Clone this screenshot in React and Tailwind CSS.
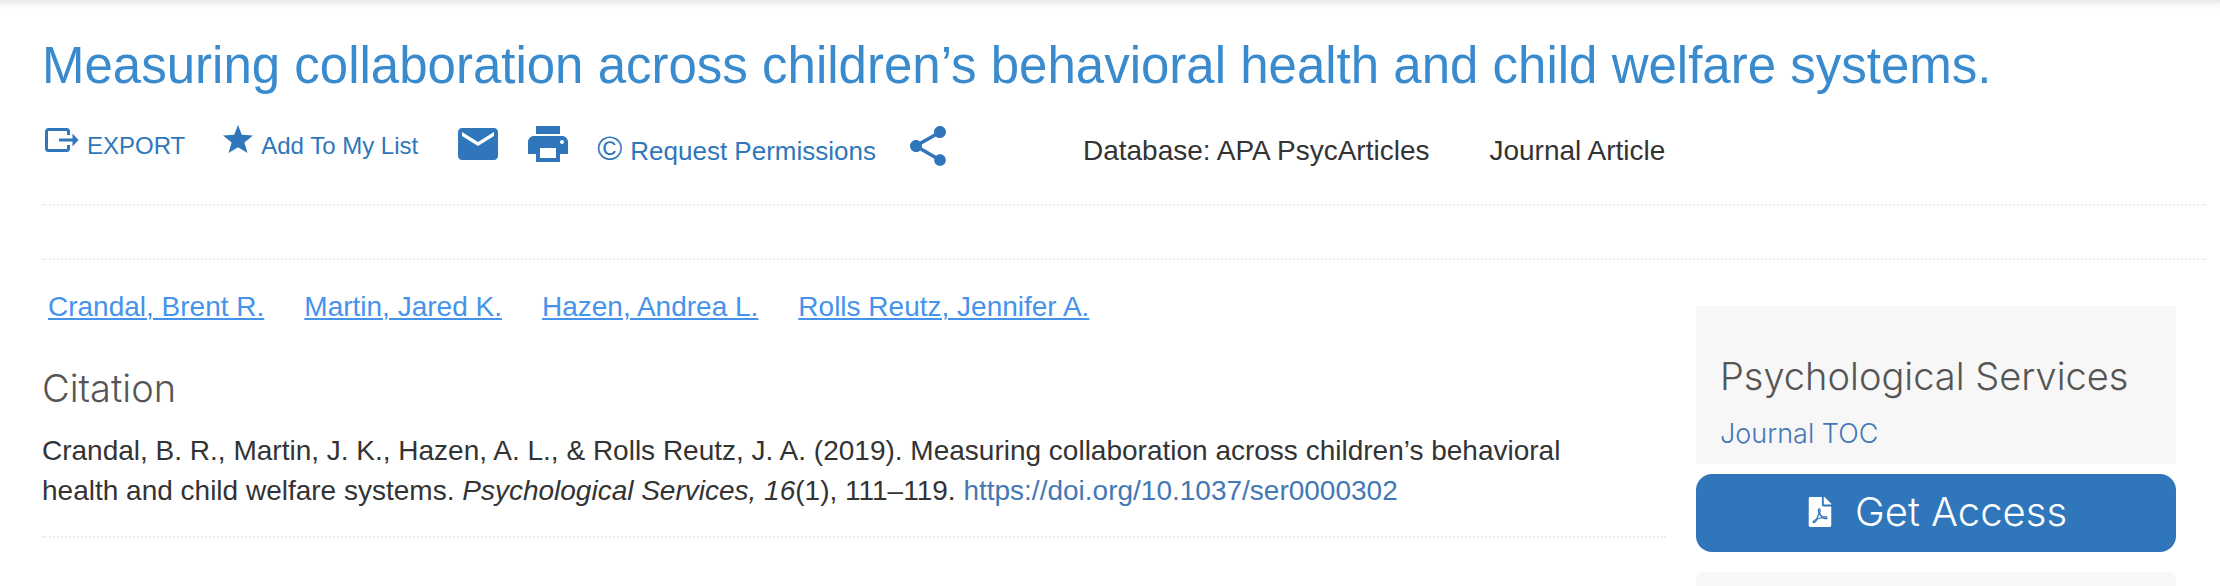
import React from 'react';
import { MdEmail, MdPrint, MdShare } from 'react-icons/md';
import { FaFilePdf } from 'react-icons/fa';

const authors = ['Crandal, Brent R.', 'Martin, Jared K.', 'Hazen, Andrea L.', 'Rolls Reutz, Jennifer A.'];

function ExportIcon() {
  return (
    <svg viewBox="0 0 34 24" className="w-[34px] h-6" fill="none" stroke="currentColor" strokeWidth="3">
      <path d="M23.500 7V3.500a2 2 0 0 0-2-2h-18a2 2 0 0 0-2 2v17a2 2 0 0 0 2 2h18a2 2 0 0 0 2-2V17" />
      <path d="M14 12h14" />
      <path d="M27.500 5.500l6 6.500-6 6.500z" fill="currentColor" stroke="none" />
    </svg>
  );
}

function StarIcon() {
  return (
    <svg viewBox="0 0 30 28" className="w-[30px] h-7" fill="currentColor">
      <path d="M15 0l3.800 9.800 11.200.8-8.600 7 3.100 10.400L15 22.200 5.500 28l3.100-10.400-8.600-7 11.200-.8z" />
    </svg>
  );
}

function Toolbar() {
  return (
    <div className="flex items-start h-[109px] pt-[25px] text-[#2f76bb]">
      <button type="button" className="flex items-start pt-2 ml-[3px] text-2xl">
        <ExportIcon />
        <span className="ml-2 mt-[2px]">EXPORT</span>
      </button>
      <button type="button" className="flex items-start pt-[5px] ml-[38px] text-2xl">
        <StarIcon />
        <span className="ml-2 mt-[5px]">Add To My List</span>
      </button>
      <button type="button" aria-label="Email" className="ml-9">
        <MdEmail size={48} />
      </button>
      <button type="button" aria-label="Print" className="ml-[22px]">
        <MdPrint size={48} />
      </button>
      <a href="#permissions" className="flex items-baseline ml-[25px] mt-2 text-[26px] leading-10">
        <span className="text-[34px] mr-2">©</span>
        Request Permissions
      </a>
      <button type="button" aria-label="Share" className="ml-[28px] mt-[2px]">
        <MdShare size={48} />
      </button>
      <p className="ml-[131px] mt-[11px] text-[28px] leading-10 text-[#333]">Database: APA PsycArticles</p>
      <p className="ml-[60px] mt-[11px] text-[28px] leading-10 text-[#333]">Journal Article</p>
    </div>
  );
}

function Sidebar() {
  return (
    <aside className="w-[480px] shrink-0 mt-[46px]">
      <div className="bg-[#f7f7f7] px-6 pt-11 pb-2">
        <h2 className="font-['Inter',sans-serif] font-light text-[38px] leading-[52px] text-[#555]">
          Psychological Services
        </h2>
        <a
          href="#toc"
          className="block pt-[10px] font-['Inter',sans-serif] font-light text-[27px] leading-[44px] text-[#4478b5]"
        >
          Journal TOC
        </a>
      </div>
      <button
        type="button"
        className="flex items-center justify-center w-full h-[78px] pb-[3px] mt-[10px] rounded-2xl bg-[#2f76bb] text-white font-['Inter',sans-serif] font-light text-[40px]"
      >
        <FaFilePdf size={30} className="mr-5" />
        Get Access
      </button>
      <div className="h-[14px] mt-5 rounded-t-lg bg-[#f7f7f7]" />
    </aside>
  );
}

function App() {
  return (
    <div className="overflow-hidden bg-white font-['Liberation_Sans',sans-serif] text-[#333]">
      <div className="h-[10px] bg-linear-to-b from-[#e8e8e8] via-[#f8f8f8] to-white" />
      <header className="pl-[42px] pr-[14px] pt-[26px]">
        <h1 className="text-[51px] leading-[59px] text-[#3a8bce]">
          Measuring collaboration across children’s behavioral health and child welfare systems.
        </h1>
        <Toolbar />
        <div className="h-14 border-y-2 border-dotted border-[#ececec]" />
      </header>
      <div className="flex pl-[42px] pr-[44px]">
        <main className="grow mr-[30px]">
          <div className="flex gap-10 pl-[6px] mt-[27px]">
            {authors.map((name) => (
              <a
                key={name}
                href="#author"
                className="text-[28px] leading-10 text-[#4693ec] underline decoration-2 underline-offset-2"
              >
                {name}
              </a>
            ))}
          </div>
          <h2 className="mt-[35px] font-['Inter',sans-serif] font-light text-[38px] leading-[52px] text-[#555]">
            Citation
          </h2>
          <p className="mt-[17px] max-w-[1560px] text-[28px] leading-10">
            Crandal, B. R., Martin, J. K., Hazen, A. L., &amp; Rolls Reutz, J. A. (2019). Measuring collaboration across
            children’s behavioral health and child welfare systems. <em>Psychological Services, 16</em>(1), 111–119.{' '}
            <a href="https://doi.org/10.1037/ser0000302" className="text-[#4478b5]">
              https://doi.org/10.1037/ser0000302
            </a>
          </p>
          <hr className="mt-[25px] border-t-2 border-dotted border-[#ececec]" />
        </main>
        <Sidebar />
      </div>
    </div>
  );
}

export default App;
